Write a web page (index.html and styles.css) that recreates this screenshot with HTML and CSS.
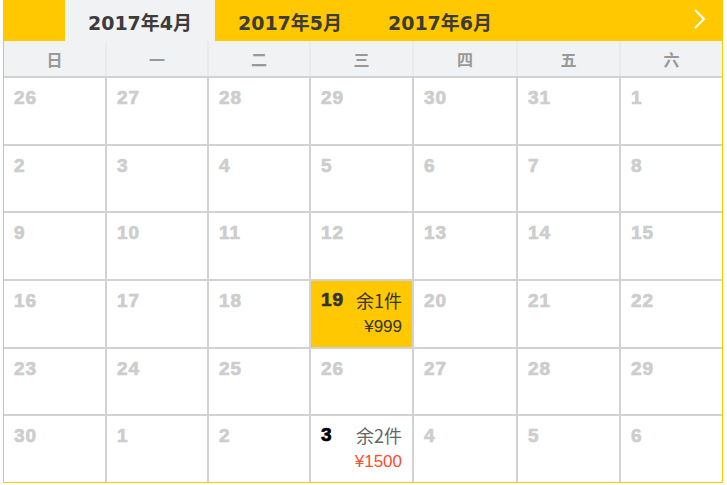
FILE: index.html
```html
<!DOCTYPE html>
<html lang="zh">
<head>
<meta charset="utf-8">
<link rel="stylesheet" href="styles.css">
</head>
<body>
<div class="cal">
  <div class="bar">
    <div class="spacer"></div>
    <div class="tab active">2017年4月</div>
    <div class="tab">2017年5月</div>
    <div class="tab">2017年6月</div>
    <div class="fill"></div>
    <div class="next"><svg width="14" height="20" viewBox="0 0 14 20"><path d="M2 1 L11 10 L2 19" fill="none" stroke="#fff" stroke-width="2"/></svg></div>
  </div>
  <div class="week">
    <div>日</div><div>一</div><div>二</div><div>三</div><div>四</div><div>五</div><div>六</div>
  </div>
  <div class="grid">
    <div class="cell"><span class="num">26</span></div>
    <div class="cell"><span class="num">27</span></div>
    <div class="cell"><span class="num">28</span></div>
    <div class="cell"><span class="num">29</span></div>
    <div class="cell"><span class="num">30</span></div>
    <div class="cell"><span class="num">31</span></div>
    <div class="cell"><span class="num">1</span></div>

    <div class="cell"><span class="num">2</span></div>
    <div class="cell"><span class="num">3</span></div>
    <div class="cell"><span class="num">4</span></div>
    <div class="cell"><span class="num">5</span></div>
    <div class="cell"><span class="num">6</span></div>
    <div class="cell"><span class="num">7</span></div>
    <div class="cell"><span class="num">8</span></div>

    <div class="cell"><span class="num">9</span></div>
    <div class="cell"><span class="num">10</span></div>
    <div class="cell"><span class="num">11</span></div>
    <div class="cell"><span class="num">12</span></div>
    <div class="cell"><span class="num">13</span></div>
    <div class="cell"><span class="num">14</span></div>
    <div class="cell"><span class="num">15</span></div>

    <div class="cell"><span class="num">16</span></div>
    <div class="cell"><span class="num">17</span></div>
    <div class="cell"><span class="num">18</span></div>
    <div class="cell sel">
      <div class="top"><span class="num">19</span><span class="stock">余1件</span></div>
      <div class="price">¥999</div>
    </div>
    <div class="cell"><span class="num">20</span></div>
    <div class="cell"><span class="num">21</span></div>
    <div class="cell"><span class="num">22</span></div>

    <div class="cell"><span class="num">23</span></div>
    <div class="cell"><span class="num">24</span></div>
    <div class="cell"><span class="num">25</span></div>
    <div class="cell"><span class="num">26</span></div>
    <div class="cell"><span class="num">27</span></div>
    <div class="cell"><span class="num">28</span></div>
    <div class="cell"><span class="num">29</span></div>

    <div class="cell"><span class="num">30</span></div>
    <div class="cell"><span class="num">1</span></div>
    <div class="cell"><span class="num">2</span></div>
    <div class="cell avail">
      <div class="top"><span class="num">3</span><span class="stock">余2件</span></div>
      <div class="price">¥1500</div>
    </div>
    <div class="cell"><span class="num">4</span></div>
    <div class="cell"><span class="num">5</span></div>
    <div class="cell"><span class="num">6</span></div>
  </div>
</div>
</body>
</html>
```
FILE: styles.css
```css
* { box-sizing: border-box; }
body {
  margin: 0;
  background: #fff;
  font-family: "Noto Sans CJK SC", "Noto Sans", sans-serif;
}
.cal {
  margin-left: 3px;
  width: 720px;
  height: 483px;
  border: 1px solid #ffc800;
  border-top: 0;
  display: flex;
  flex-direction: column;
}
.bar {
  margin: 0 -1px;
  height: 41px;
  background: #ffc800;
  display: flex;
  align-items: stretch;
}
.spacer { width: 62px; }
.tab {
  width: 150px;
  display: flex;
  align-items: center;
  justify-content: center;
  font-family: "DejaVu Sans", "Noto Sans CJK SC", sans-serif;
  font-weight: bold;
  font-size: 19px;
  color: #3c3c3c;
  padding-top: 1px;
}
.tab.active { background: #f1f2f4; }
.fill { flex: 1; }
.next {
  width: 38px;
  display: flex;
  align-items: center;
  justify-content: flex-start;
  padding-left: 8px;
  padding-bottom: 4px;
}
.week, .grid {
  display: grid;
  grid-template-columns: 101px 100px 100px 101px 102px 101px 1fr;
  column-gap: 2px;
}
.week {
  height: 37px;
  background: #e9eaec;
  border-bottom: 2px solid #d2d2d2;
}
.week div {
  background: #f1f2f4;
  display: flex;
  align-items: center;
  justify-content: center;
  font-size: 16px;
  color: #999;
  font-weight: bold;
}
.grid {
  flex: 1;
  grid-template-rows: repeat(6, 1fr);
  row-gap: 2px;
  background: #d2d2d2;
}
.cell {
  background: #fff;
  padding: 7px 9px 0 10px;
}
.num {
  font-family: "Liberation Sans", Arial, sans-serif;
  font-weight: bold;
  font-size: 19px;
  letter-spacing: 1px;
  -webkit-text-stroke: 0.7px currentColor;
  color: #cdcdcd;
  line-height: 24px;
}
.top {
  display: flex;
  justify-content: space-between;
  align-items: center;
}
.stock {
  font-size: 18px;
  color: #444;
  line-height: 24px;
  margin-right: 1px;
}
.price {
  text-align: right;
  font-family: "Liberation Sans", Arial, sans-serif;
  font-size: 17px;
  margin-top: 5px;
  line-height: 20px;
  margin-right: 1px;
}
.sel { background: #ffc800; }
.sel .num { color: #333; }
.sel .stock { color: #333; }
.sel .price { color: #333; }
.avail .num { color: #000; }
.avail .stock { color: #666; }
.avail .price { color: #ff4b2b; }
```
